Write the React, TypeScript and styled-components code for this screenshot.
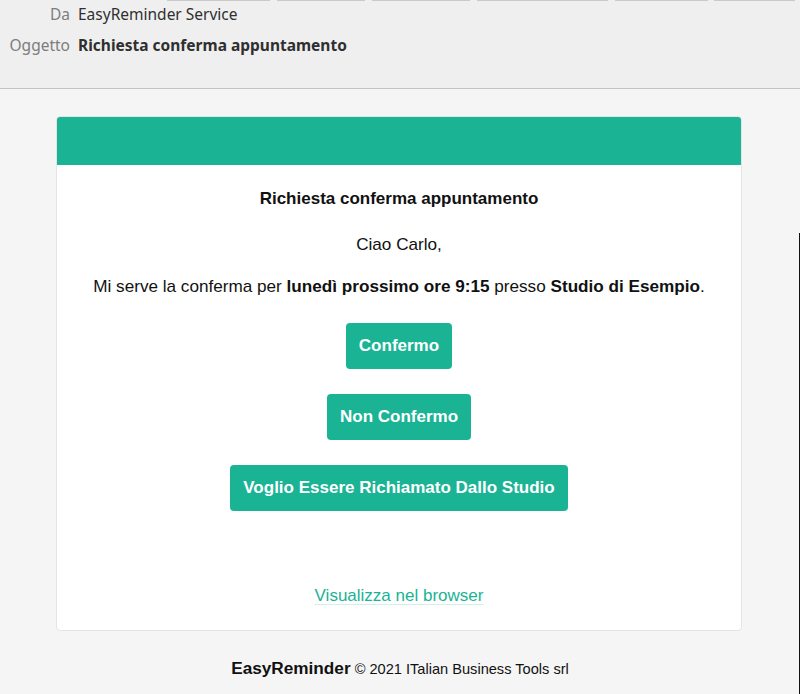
import styled, { createGlobalStyle } from "styled-components";

const GlobalStyle = createGlobalStyle`
  html, body {
    margin: 0;
    padding: 0;
    background: #f5f5f5;
  }
  * {
    box-sizing: border-box;
  }
`;

const tabs = [
  { left: 167, width: 103 },
  { left: 277, width: 88 },
  { left: 372, width: 98 },
  { left: 477, width: 131 },
  { left: 615, width: 93 },
  { left: 714, width: 81 },
];

const App = () => {
  return (
    <Page>
      <GlobalStyle />
      <MailHeader>
        <TabStrip>
          {tabs.map((t) => (
            <Tab key={t.left} style={{ left: t.left, width: t.width }} />
          ))}
        </TabStrip>
        <HeaderRow>
          <Label>Da</Label>
          <Value>EasyReminder Service</Value>
        </HeaderRow>
        <HeaderRow>
          <Label>Oggetto</Label>
          <Value $bold>Richiesta conferma appuntamento</Value>
        </HeaderRow>
      </MailHeader>

      <MailBody>
        <Card>
          <CardTop />
          <CardContent>
            <Title>Richiesta conferma appuntamento</Title>
            <Text $gap={21}>Ciao Carlo,</Text>
            <Text $gap={18}>
              Mi serve la conferma per <b>lunedì prossimo ore 9:15</b> presso{" "}
              <b>Studio di Esempio</b>.
            </Text>
            <Actions>
              <Button>Confermo</Button>
              <Button>Non Confermo</Button>
              <Button>Voglio Essere Richiamato Dallo Studio</Button>
            </Actions>
            <BrowserLink href="#">Visualizza nel browser</BrowserLink>
          </CardContent>
        </Card>
        <Footer>
          <strong>EasyReminder</strong> © 2021 ITalian Business Tools srl
        </Footer>
      </MailBody>
      <WindowEdge />
    </Page>
  );
};

const Page = styled.div`
  position: relative;
  width: 800px;
  height: 694px;
  overflow: hidden;
  background: #f5f5f5;
`;

const MailHeader = styled.div`
  position: relative;
  display: flex;
  flex-direction: column;
  gap: 10px;
  height: 89px;
  padding-top: 3px;
  background: #efefef;
  border-bottom: 1px solid #c4c4c4;
  font-family: "Noto Sans", "DejaVu Sans", sans-serif;
  font-size: 15.5px;
`;

const TabStrip = styled.div`
  position: absolute;
  top: 0;
  left: 0;
  right: 0;
  height: 2px;
`;

const Tab = styled.div`
  position: absolute;
  top: 0;
  height: 1px;
  background: #c9c9c9;
`;

const HeaderRow = styled.div`
  display: flex;
  align-items: center;
  gap: 8px;
  height: 21px;
`;

const Label = styled.span`
  width: 70px;
  text-align: right;
  color: #7d7d7d;
`;

const Value = styled.span<{ $bold?: boolean }>`
  color: #2f2f2f;
  font-weight: ${(p) => (p.$bold ? 700 : 400)};
`;

const MailBody = styled.div`
  display: flex;
  flex-direction: column;
  align-items: center;
  padding-top: 27px;
  font-family: "Liberation Sans", Arial, sans-serif;
  color: #111;
`;

const Card = styled.div`
  width: 686px;
  margin-left: -2px;
  background: #ffffff;
  border: 1px solid #e4e4e4;
  border-radius: 4px;
  overflow: hidden;
`;

const CardTop = styled.div`
  height: 48px;
  background: #1ab394;
`;

const CardContent = styled.div`
  display: flex;
  flex-direction: column;
  align-items: center;
  padding: 22px 20px 22px;
`;

const Title = styled.h1`
  margin: 0;
  font-size: 17px;
  line-height: 24px;
  font-weight: 700;
`;

const Text = styled.p<{ $gap: number }>`
  margin: ${(p) => p.$gap}px 0 0;
  font-size: 17.15px;
  line-height: 24px;
  text-align: center;
`;

const Actions = styled.div`
  display: flex;
  flex-direction: column;
  align-items: center;
  gap: 25px;
  margin-top: 25px;
`;

const Button = styled.button`
  height: 46px;
  padding: 0 13px;
  border: none;
  border-radius: 4px;
  background: #1ab394;
  color: #ffffff;
  font-family: "Liberation Sans", Arial, sans-serif;
  font-size: 17px;
  font-weight: 700;
`;

const BrowserLink = styled.a`
  margin-top: 73px;
  font-size: 17px;
  line-height: 24px;
  color: #1ab394;
  text-decoration: underline;
  text-decoration-color: #d3efe8;
  text-underline-offset: 3px;
`;

const Footer = styled.div`
  margin-top: 25px;
  font-size: 14.6px;
  line-height: 24px;
  color: #111;
  strong {
    font-size: 17.2px;
  }
`;

const WindowEdge = styled.div`
  position: absolute;
  right: 0;
  top: 233px;
  bottom: 0;
  width: 1px;
  background: #111;
`;

export default App;
